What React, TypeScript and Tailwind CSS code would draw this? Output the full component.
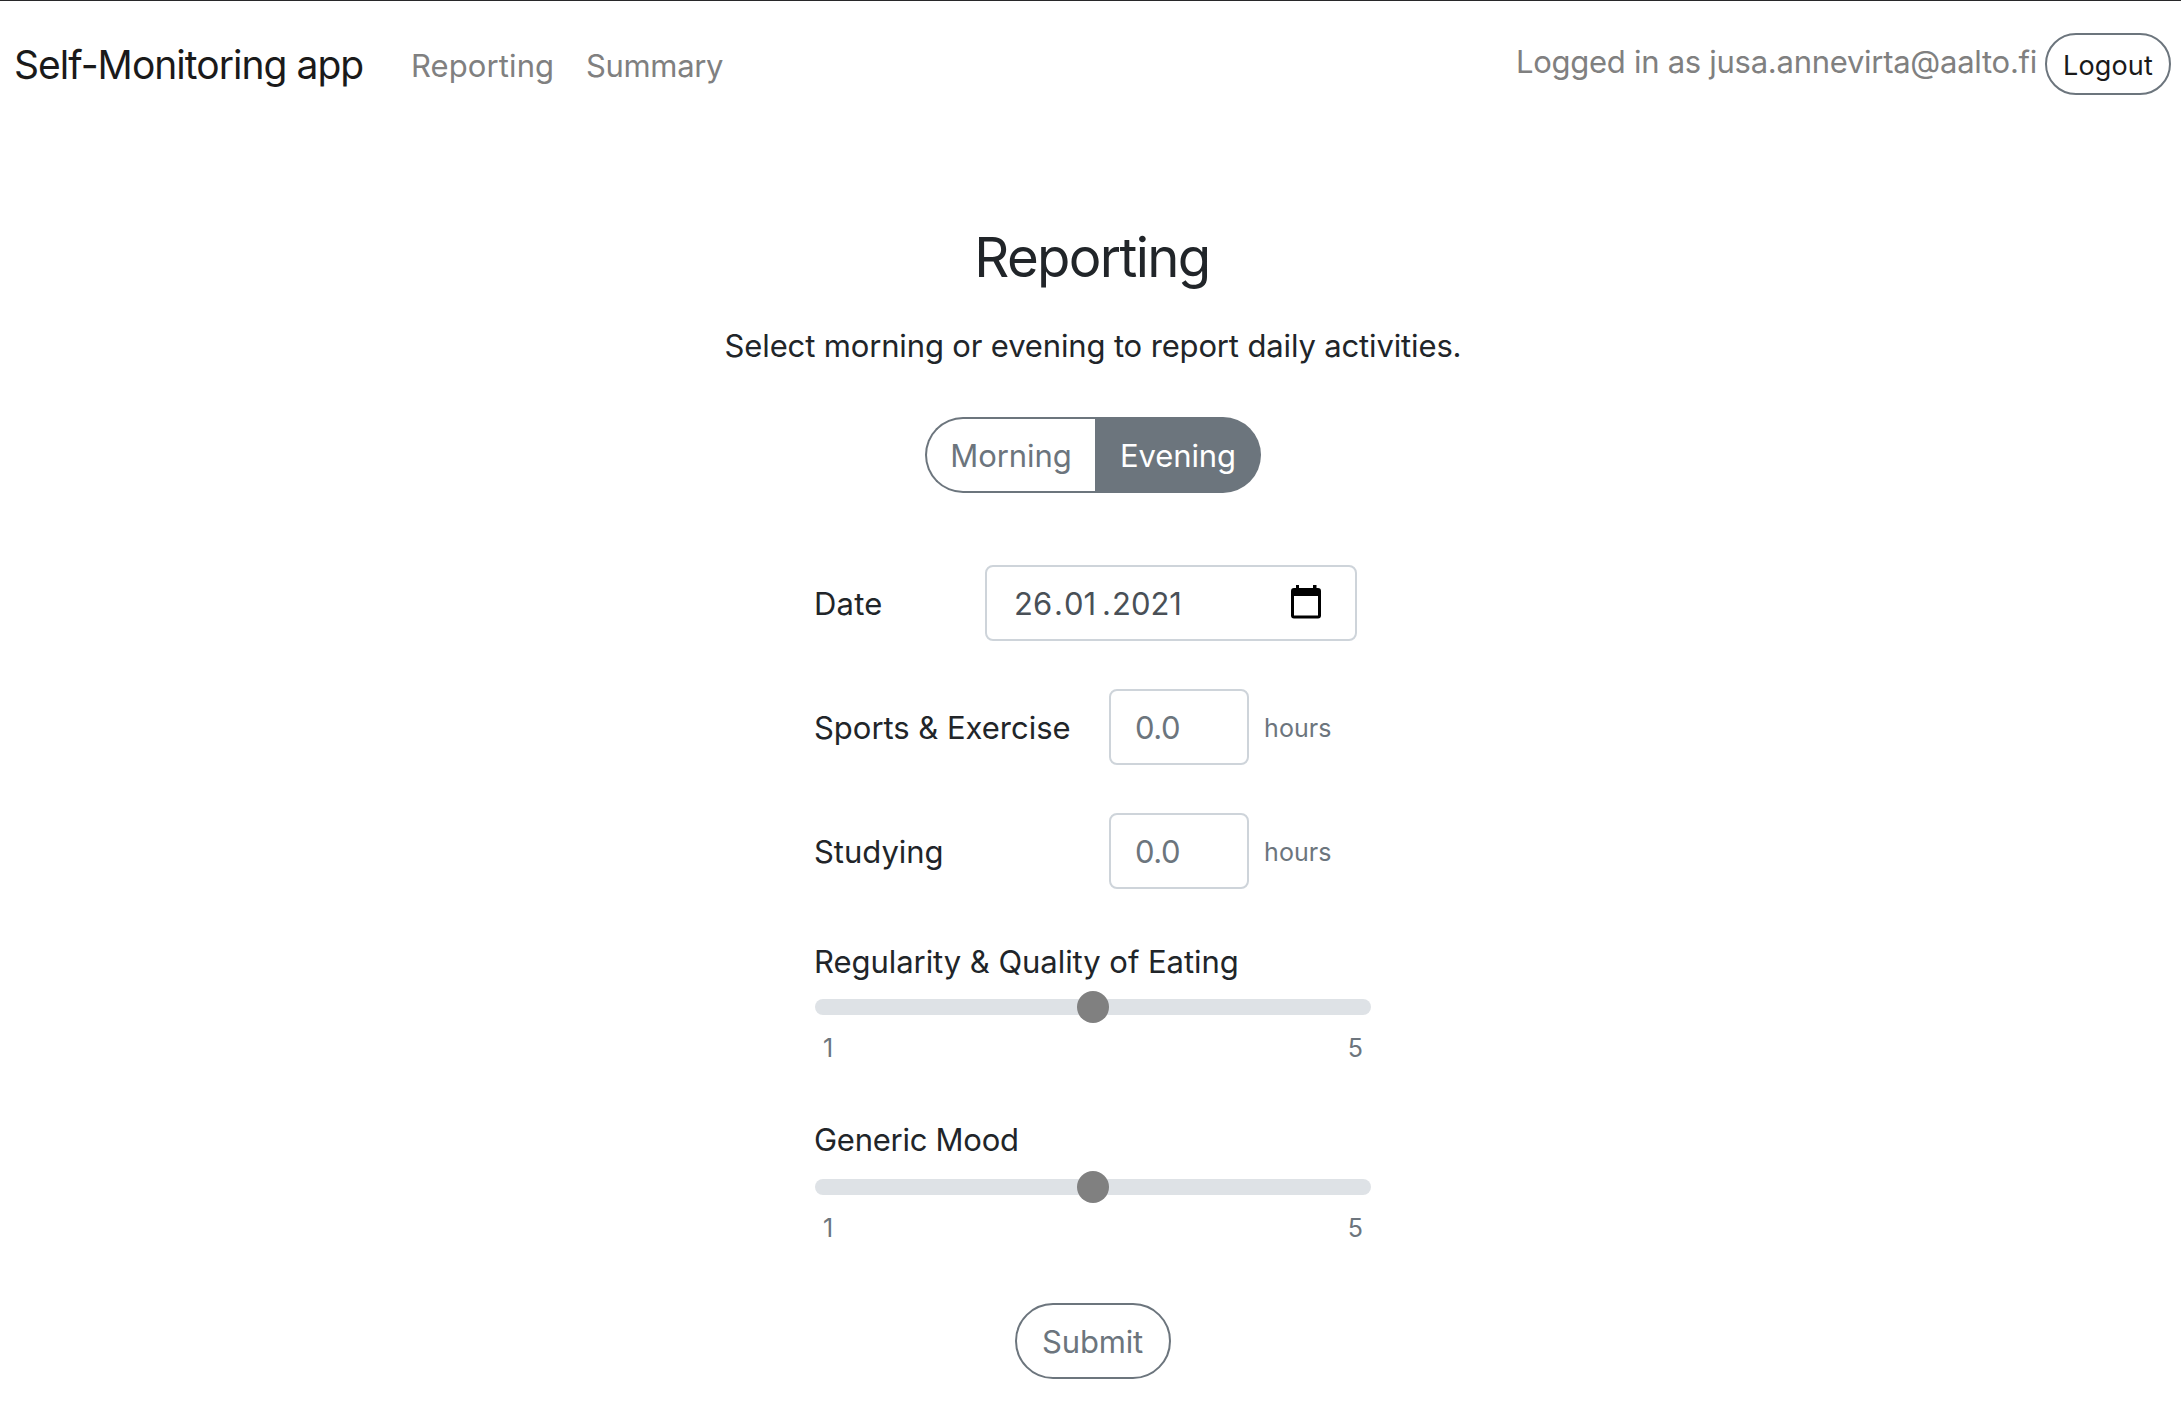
import React from "react";

function CalendarIcon() {
  return (
    <svg width="30" height="34" viewBox="0 0 30 34" className="block shrink-0" aria-hidden="true">
      <path
        fillRule="evenodd"
        d="M5 0h3v3h14V0h3.500v3H27a3 3 0 0 1 3 3v24.500a3 3 0 0 1-3 3H3a3 3 0 0 1-3-3V6a3 3 0 0 1 3-3h2zM3 11v19.500h24V11z"
        fill="#000"
      />
    </svg>
  );
}

function HoursRow({ label, tracking, last }: { label: string; tracking: string; last?: boolean }) {
  return (
    <div className={last ? "flex h-[76px] items-center" : "mb-12 flex h-[76px] items-center"}>
      <label className={`-ml-px w-[295px] text-[31px] leading-none whitespace-nowrap ${tracking}`}>{label}</label>
      <div className="flex h-[76px] w-[140px] items-center rounded-[8px] border-2 border-[#ced4da] pt-px pl-[24px] text-[31px] leading-none tracking-[-0.46px] text-[#6c757d]">
        0.0
      </div>
      <span className="ml-[15px] pt-[2px] text-[25px] leading-none tracking-[0.1px] text-[#6c757d]">hours</span>
    </div>
  );
}

function RatingSlider({ label, tracking, gap }: { label: string; tracking: string; gap: string }) {
  return (
    <div>
      <div className={`-ml-px h-[40px] text-[31px] leading-[40px] whitespace-nowrap ${tracking}`}>{label}</div>
      <div className={`flex h-[32px] items-center justify-center rounded-full ${gap}`}>
        <div className="flex h-4 w-full items-center justify-center rounded-full bg-[#dee2e6]">
          <div className="h-8 w-8 shrink-0 rounded-full bg-[#808080]" />
        </div>
      </div>
      <div className="mt-[5px] flex h-10 justify-between pr-2 pl-[8px] text-[25px] leading-[40px] text-[#6c757d]">
        <span>1</span>
        <span>5</span>
      </div>
    </div>
  );
}

export default function App() {
  return (
    <div className="h-[1401px] w-full overflow-hidden bg-white font-[Inter,sans-serif] text-[#212529]">
      <header className="flex h-[130px] items-center border-t border-[#28282a] pr-[10px] pl-[14px]">
        <a className="w-[397px] pb-[2px] text-[39px] leading-none tracking-[-0.97px] whitespace-nowrap text-[#1a1a1a]">
          Self-Monitoring app
        </a>
        <nav className="flex items-center text-[31px] leading-none text-[#808080]">
          <a className="w-[175px] tracking-[0.1px]">Reporting</a>
          <a className="tracking-[-0.35px]">Summary</a>
        </nav>
        <div className="ml-auto flex items-center">
          <span className="mr-[8px] pb-[9px] text-[31px] leading-none tracking-[-0.27px] whitespace-nowrap text-[#808080]">
            Logged in as jusa.annevirta@aalto.fi
          </span>
          <button className="mb-[3px] flex h-[62px] w-[126px] items-center justify-center rounded-full border-2 border-[#6c757d] pt-[2px] text-[27px] leading-none tracking-[0.16px] text-[#1a1a1a]">
            Logout
          </button>
        </div>
      </header>

      <main className="flex flex-col items-center pl-[5px]">
        <h1 className="mt-[92px] h-[70px] pr-[2px] text-[54.5px] leading-[70px] tracking-[-1.65px]">Reporting</h1>
        <p className="mt-[34px] h-[40px] text-[31px] leading-[40px] tracking-[-0.145px] whitespace-nowrap">
          Select morning or evening to report daily activities.
        </p>

        <div className="mt-[51px] flex h-[76px] w-[336px] text-[31px] leading-none">
          <button className="flex w-[170px] items-center justify-center rounded-l-full border-2 border-r-0 border-[#6c757d] pt-px tracking-[-0.08px] text-[#6c757d]">
            Morning
          </button>
          <button className="flex flex-1 items-center justify-center rounded-r-full bg-[#6c757d] pt-px tracking-[-0.11px] text-white">
            Evening
          </button>
        </div>

        <form className="mt-[72px] w-[556px]">
          <div className="mb-12 flex h-[76px] items-center">
            <label className="-ml-px w-[171px] text-[31px] leading-none tracking-[0.2px]">Date</label>
            <div className="flex h-[76px] w-[372px] items-center rounded-[8px] border-2 border-[#ced4da] pr-[34px] pl-[27px]">
              <div className="flex text-[31px] leading-none text-[#495057]">
                <span className="w-[37px]">26</span>
                <span className="w-[13px] pl-[3px]">.</span>
                <span className="w-[35px]">01</span>
                <span className="w-[13px] pl-[3px]">.</span>
                <span>2021</span>
              </div>
              <div className="ml-auto pb-[2px]">
                <CalendarIcon />
              </div>
            </div>
          </div>

          <HoursRow label="Sports & Exercise" tracking="tracking-[-0.024px]" />
          <HoursRow label="Studying" tracking="tracking-[-0.02px]" last />

          <div className="mt-[53px]">
            <RatingSlider label="Regularity & Quality of Eating" tracking="tracking-[-0.05px]" gap="mt-[9px]" />
          </div>
          <div className="mt-[52px]">
            <RatingSlider label="Generic Mood" tracking="tracking-[-0.26px]" gap="mt-[11px]" />
          </div>

          <button
            type="button"
            className="mx-auto mt-[55px] flex h-[76px] w-[156px] items-center justify-center rounded-full border-2 border-[#6c757d] pt-px pr-px text-[31px] leading-none tracking-[-0.17px] text-[#6c757d]"
          >
            Submit
          </button>
        </form>
      </main>
    </div>
  );
}
